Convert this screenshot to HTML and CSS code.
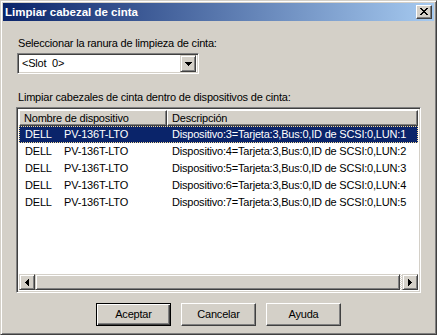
FILE: index.html
```html
<!DOCTYPE html>
<html lang="es">
<head>
<meta charset="utf-8">
<title>Limpiar cabezal de cinta</title>
<link rel="stylesheet" href="styles.css">
</head>
<body>
<div class="window">
  <div class="titlebar">
    <span class="title">Limpiar cabezal de cinta</span>
    <div class="close">
      <svg width="8" height="7" viewBox="0 0 8 7" shape-rendering="crispEdges"><path fill="#000" d="M0 0h2v1H0zM6 0h2v1H6zM1 1h2v1H1zM5 1h2v1H5zM2 2h4v1H2zM3 3h2v1H3zM2 4h4v1H2zM1 5h2v1H1zM5 5h2v1H5zM0 6h2v1H0zM6 6h2v1H6z"/></svg>
    </div>
  </div>
  <div class="body">
    <div class="label">Seleccionar la ranura de limpieza de cinta:</div>
    <div class="combo">
      <span class="combo-text">&lt;Slot  0&gt;</span>
      <div class="combo-btn">
        <svg width="7" height="4" viewBox="0 0 7 4" shape-rendering="crispEdges"><path fill="#000" d="M0 0h7v1H0zM1 1h5v1H1zM2 2h3v1H2zM3 3h1v1H3z"/></svg>
      </div>
    </div>
    <div class="label label2">Limpiar cabezales de cinta dentro de dispositivos de cinta:</div>
    <div class="listbox">
      <div class="header">
        <div class="hcell c1">Nombre de dispositivo</div>
        <div class="hcell c2">Descripción</div>
      </div>
      <div class="rows">
        <div class="row selected"><div class="cell c1"><span class="vendor">DELL</span><span>PV-136T-LTO</span></div><div class="cell c2">Dispositivo:3=Tarjeta:3,Bus:0,ID de SCSI:0,LUN:1</div></div>
        <div class="row"><div class="cell c1"><span class="vendor">DELL</span><span>PV-136T-LTO</span></div><div class="cell c2">Dispositivo:4=Tarjeta:3,Bus:0,ID de SCSI:0,LUN:2</div></div>
        <div class="row"><div class="cell c1"><span class="vendor">DELL</span><span>PV-136T-LTO</span></div><div class="cell c2">Dispositivo:5=Tarjeta:3,Bus:0,ID de SCSI:0,LUN:3</div></div>
        <div class="row"><div class="cell c1"><span class="vendor">DELL</span><span>PV-136T-LTO</span></div><div class="cell c2">Dispositivo:6=Tarjeta:3,Bus:0,ID de SCSI:0,LUN:4</div></div>
        <div class="row"><div class="cell c1"><span class="vendor">DELL</span><span>PV-136T-LTO</span></div><div class="cell c2">Dispositivo:7=Tarjeta:3,Bus:0,ID de SCSI:0,LUN:5</div></div>
      </div>
      <div class="hscroll">
        <div class="sbtn">
          <svg width="4" height="7" viewBox="0 0 4 7" shape-rendering="crispEdges"><path fill="#000" d="M3 0h1v7H3zM2 1h1v5H2zM1 2h1v3H1zM0 3h1v1H0z"/></svg>
        </div>
        <div class="thumb"></div>
        <div class="track"></div>
        <div class="sbtn">
          <svg width="4" height="7" viewBox="0 0 4 7" shape-rendering="crispEdges"><path fill="#000" d="M0 0h1v7H0zM1 1h1v5H1zM2 2h1v3H2zM3 3h1v1H3z"/></svg>
        </div>
      </div>
    </div>
    <div class="buttons">
      <div class="btn default">Aceptar</div>
      <div class="btn">Cancelar</div>
      <div class="btn">Ayuda</div>
    </div>
  </div>
</div>
</body>
</html>
```
FILE: styles.css
```css
* { box-sizing: border-box; }
html, body { margin: 0; padding: 0; }
body {
  width: 437px;
  height: 335px;
  background: #d4d0c8;
  font-family: "Liberation Sans", Arial, sans-serif;
  font-size: 11px;
  color: #000;
}
.window {
  width: 437px;
  height: 335px;
  background: #d4d0c8;
  border: 1px solid;
  border-color: #d4d0c8 #404040 #404040 #d4d0c8;
  box-shadow: inset 1px 1px #fff, inset -1px -1px #808080;
  padding: 2px;
  display: flex;
  flex-direction: column;
}
.titlebar {
  height: 18px;
  background: linear-gradient(to right, #0a246a, #a6caf0);
  display: flex;
  align-items: center;
  justify-content: space-between;
  padding: 0 2px 0 2px;
}
.title {
  color: #fff;
  font-weight: bold;
  font-size: 11.5px;
  line-height: 18px;
}
.close {
  width: 16px;
  height: 14px;
  background: #d4d0c8;
  border: 1px solid;
  border-color: #fff #404040 #404040 #fff;
  box-shadow: inset -1px -1px #808080;
  display: flex;
  align-items: center;
  justify-content: center;
  padding: 0 1px 1px 0;
}
.close svg { display: block; }
.body {
  flex: 1;
  padding: 16px 13px 6px 13px;
  display: flex;
  flex-direction: column;
  letter-spacing: -0.2px;
}
.label {
  line-height: 13px;
  height: 13px;
  margin-left: 2px;
  white-space: nowrap;
}
.label2 { margin-top: 17px; }
.combo {
  margin-top: 3px;
  margin-left: 1px;
  width: 182px;
  height: 21px;
  background: #fff;
  border: 1px solid;
  border-color: #808080 #fff #fff #808080;
  box-shadow: inset 1px 1px #404040, inset -1px -1px #d4d0c8;
  padding: 2px;
  display: flex;
  align-items: center;
  justify-content: space-between;
}
.combo-text {
  white-space: pre;
  padding-left: 2px;
  line-height: 13px;
}
.combo-btn {
  width: 16px;
  height: 17px;
  background: #d4d0c8;
  border: 1px solid;
  border-color: #d4d0c8 #404040 #404040 #d4d0c8;
  box-shadow: inset 1px 1px #fff, inset -1px -1px #808080;
  display: flex;
  align-items: center;
  justify-content: center;
}
.combo-btn svg { display: block; }
.listbox {
  margin-top: 3px;
  height: 186px;
  background: #fff;
  border: 1px solid;
  border-color: #808080 #fff #fff #808080;
  box-shadow: inset 1px 1px #404040, inset -1px -1px #d4d0c8;
  padding: 2px;
  display: flex;
  flex-direction: column;
}
.header {
  display: flex;
  height: 16px;
  background: #d4d0c8;
}
.hcell {
  height: 16px;
  line-height: 14px;
  border: 1px solid;
  border-color: #fff #404040 #404040 #fff;
  box-shadow: inset -1px -1px #808080;
  padding-left: 4px;
  white-space: nowrap;
  overflow: hidden;
}
.hcell.c1 { width: 148px; }
.hcell.c2 { flex: 1; }
.rows { flex: 1; }
.row {
  display: flex;
  height: 17px;
  line-height: 17px;
  white-space: nowrap;
}
.row.selected {
  background: #0a246a;
  color: #fff;
  outline: 1px dotted #f5db95;
  outline-offset: -1px;
}
.cell.c1 { width: 148px; padding-left: 6px; }
.cell.c2 { flex: 1; padding-left: 5px; }
.vendor { display: inline-block; width: 39px; }
.hscroll {
  display: flex;
  height: 16px;
}
.sbtn {
  width: 16px;
  height: 16px;
  background: #d4d0c8;
  border: 1px solid;
  border-color: #d4d0c8 #404040 #404040 #d4d0c8;
  box-shadow: inset 1px 1px #fff, inset -1px -1px #808080;
  display: flex;
  align-items: center;
  justify-content: center;
}
.sbtn svg { display: block; }
.thumb {
  width: 365px;
  height: 16px;
  background: #d4d0c8;
  border: 1px solid;
  border-color: #d4d0c8 #404040 #404040 #d4d0c8;
  box-shadow: inset 1px 1px #fff, inset -1px -1px #808080;
}
.track {
  flex: 1;
  background-color: #d4d0c8;
  background-image: conic-gradient(#fff 25%, #d4d0c8 0 50%, #fff 0 75%, #d4d0c8 0);
  background-size: 2px 2px;
}
.buttons {
  margin-top: 10px;
  display: flex;
  justify-content: center;
  gap: 10px;
}
.btn {
  width: 75px;
  height: 23px;
  background: #d4d0c8;
  border: 1px solid;
  border-color: #fff #404040 #404040 #fff;
  box-shadow: inset -1px -1px #808080;
  display: flex;
  align-items: center;
  justify-content: center;
  line-height: 13px;
}
.btn.default {
  border-color: #000;
  box-shadow: inset 1px 1px #fff, inset -1px -1px #404040, inset -2px -2px #808080;
}
```
